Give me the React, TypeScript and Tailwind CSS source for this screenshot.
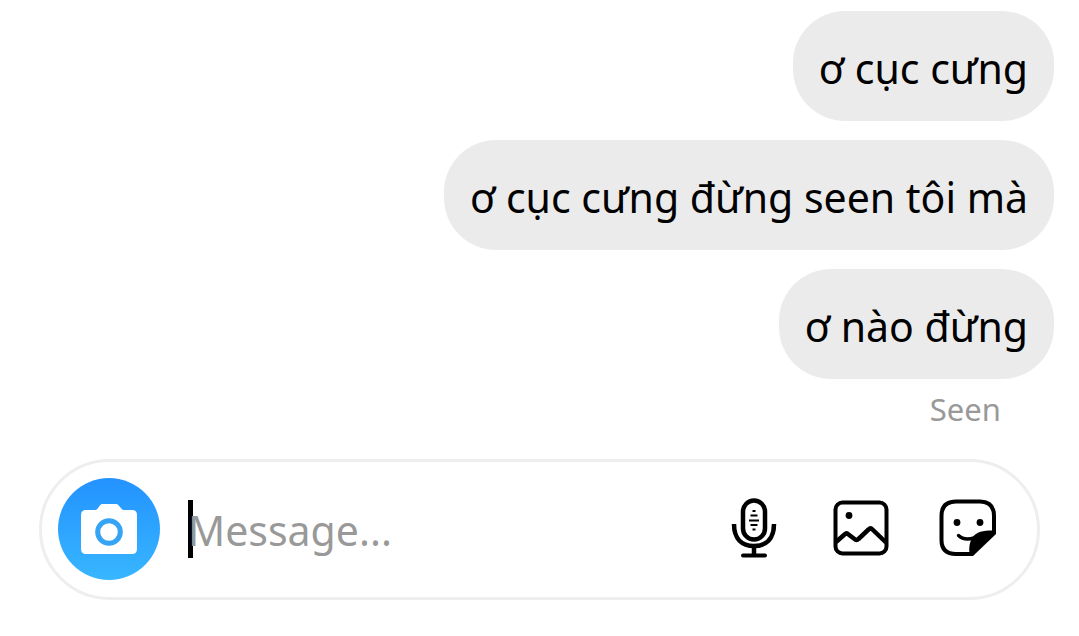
import React from "react";

const messages = ["ơ cục cưng", "ơ cục cưng đừng seen tôi mà", "ơ nào đừng"];

function CameraIcon() {
  return (
    <svg viewBox="0 0 56 50" className="h-[50px] w-14" aria-hidden="true">
      <path
        fill="#fff"
        d="M5 6H14Q15.500 6 16.500 4.800L19 1.300Q20 0 21.500 0H35Q36.500 0 37.500 1.300L40.500 4.800Q41.500 6 43 6H51Q56 6 56 11V45Q56 50 51 50H5Q0 50 0 45V11Q0 6 5 6Z"
      />
      <circle cx="28" cy="28" r="11.300" fill="none" stroke="#36a4f5" strokeWidth="5" />
    </svg>
  );
}

function MicIcon() {
  return (
    <svg viewBox="0 0 48 62" className="h-[62px] w-12" fill="none" stroke="#000" strokeWidth="4.500" aria-hidden="true">
      <rect x="13" y="3.500" width="22" height="39" rx="11" />
      <path d="M4 27C4 42 12 49 24 49S44 42 44 27" />
      <path d="M24 49V58" />
      <path d="M13 58.500H35" strokeLinecap="round" strokeWidth="4" />
      <path d="M22.500 14H25.500M20.500 18.500H27.500M19 23.500H29M20.500 28H27.500M22.500 32.500H25.500" strokeWidth="2.200" />
    </svg>
  );
}

function GalleryIcon() {
  return (
    <svg viewBox="0 0 56 56" className="size-14" fill="none" stroke="#000" strokeWidth="4" strokeLinejoin="round" aria-hidden="true">
      <rect x="2.500" y="2.500" width="51" height="51" rx="7" />
      <circle cx="16" cy="15.500" r="3.400" fill="#000" stroke="none" />
      <path d="M3 42L11.500 34.500Q13.500 32.500 15.500 34.500L21.500 39Q23.500 41 25.500 39L35.500 29.500Q37.500 27.500 39.500 29.500L53 42.500" strokeWidth="4.500" />
    </svg>
  );
}

function StickerIcon() {
  return (
    <svg viewBox="0 0 58 58" className="size-[58px]" fill="none" stroke="#000" strokeWidth="4" aria-hidden="true">
      <path d="M55 34V17Q55 2.500 41 2.500H17Q2.500 2.500 2.500 17V41Q2.500 55 17 55H33" />
      <path d="M57 31.500V35L34 57H31C29.500 51 30 42 34.500 37C40 31.500 47 31.500 57 31.500Z" fill="#000" stroke="none" />
      <circle cx="18" cy="23.500" r="3.400" fill="#000" stroke="none" />
      <circle cx="41" cy="23.500" r="3.400" fill="#000" stroke="none" />
      <path d="M19.500 36.500Q25 42 35 39" strokeWidth="3.400" strokeLinecap="round" />
    </svg>
  );
}

const toolClass = "flex w-[58px] items-center justify-center";

export default function App() {
  return (
    <main className="bg-white pt-[11px] font-['Noto_Sans',sans-serif] text-[41px] leading-[58px] text-black">
      <ul className="flex flex-col items-end gap-[19px] pr-[25px]">
        {messages.map((message) => (
          <li key={message} className="rounded-[52px] bg-[#ebebeb] px-[26px] pt-7 pb-6">
            {message}
          </li>
        ))}
      </ul>
      <p className="pt-1.5 pr-[78px] text-right text-[31px] leading-[48px] text-[#999]">Seen</p>
      <form
        onSubmit={(event) => event.preventDefault()}
        className="mx-[39px] mt-[26px] flex h-[141px] items-center rounded-full border-3 border-[#eee] pr-10 pb-0.5 pl-4"
      >
        <button
          type="button"
          aria-label="Camera"
          className="flex size-[102px] shrink-0 items-center justify-center rounded-full bg-linear-to-b from-[#2492ff] to-[#38b6ff]"
        >
          <CameraIcon />
        </button>
        <div className="relative ml-7 min-w-0 flex-1">
          <span className="absolute inset-y-0 left-0 w-[5px] bg-black" />
          <input
            type="text"
            aria-label="Message"
            placeholder="Message..."
            className="relative block w-full bg-transparent pt-0.5 leading-[56px] outline-none placeholder:text-[#999]"
          />
        </div>
        <div className="flex shrink-0 items-center gap-[49px] pb-0.5">
          <button type="button" aria-label="Record voice" className={toolClass}>
            <MicIcon />
          </button>
          <button type="button" aria-label="Choose photo" className={toolClass}>
            <GalleryIcon />
          </button>
          <button type="button" aria-label="Stickers" className={toolClass}>
            <StickerIcon />
          </button>
        </div>
      </form>
    </main>
  );
}
